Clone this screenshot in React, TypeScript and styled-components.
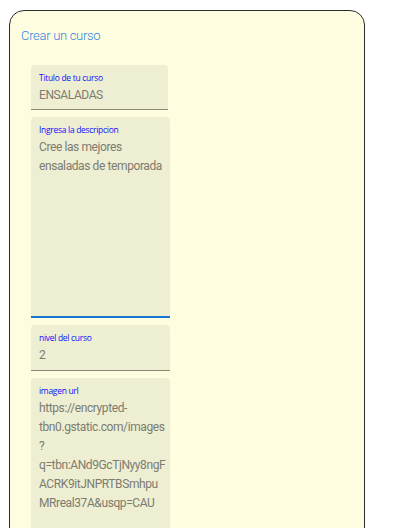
import React from "react";
import styled, { createGlobalStyle } from "styled-components";

const GlobalStyle = createGlobalStyle`
	body {
		margin: 8px;
		background: #ffffff;
		font-family: Roboto, "Liberation Sans", sans-serif;
	}
`;

const Card = styled.div`
	box-sizing: border-box;
	width: 356px;
	height: 560px;
	margin: 2px 0 0 1px;
	border: 1px solid #2b2b2b;
	border-radius: 15px;
	background: #fffde0;
	overflow: hidden;
`;

const Title = styled.h2`
	margin: 0;
	padding: 17px 0 0 11px;
	font-family: Roboto, "Liberation Sans", sans-serif;
	font-weight: 300;
	font-size: 13px;
	line-height: 16px;
	letter-spacing: -0.3px;
	color: #2f86e0;
`;

const Form = styled.form`
	display: flex;
	flex-direction: column;
	align-items: flex-start;
	gap: 7px;
	padding: 21px 0 0 21px;
`;

interface FieldProps {
	$width: number;
	$height?: number;
	$focused?: boolean;
	$open?: boolean;
}

const Field = styled.div<FieldProps>`
	box-sizing: border-box;
	width: ${(props) => props.$width}px;
	height: ${(props) => (props.$height ? `${props.$height}px` : "auto")};
	padding: 7px 8px 6px 8px;
	background: #eeeed3;
	border-radius: 4px 4px 0 0;
	border-bottom: ${(props) =>
		props.$open
			? "none"
			: props.$focused
			? "2px solid #1976d2"
			: "1px solid #8a8a76"};
`;

const Label = styled.label`
	display: block;
	font-family: "Open Sans", "Liberation Sans", sans-serif;
	font-size: 8.5px;
	line-height: 11px;
	letter-spacing: -0.3px;
	color: #1010ff;
`;

const Value = styled.div`
	margin-top: 3px;
	font-family: Roboto, "Liberation Sans", sans-serif;
	font-size: 12px;
	line-height: 19px;
	letter-spacing: -0.4px;
	color: #7c7c70;
	white-space: pre-line;
`;

function App() {
	return (
		<>
			<GlobalStyle />
			<Card>
				<Title>Crear un curso</Title>
				<Form>
					<Field $width={137} $height={45}>
						<Label>Titulo de tu curso</Label>
						<Value>ENSALADAS</Value>
					</Field>
					<Field $width={139} $height={201} $focused>
						<Label>Ingresa la descripcion</Label>
						<Value>{"Cree las mejores\nensaladas de temporada"}</Value>
					</Field>
					<Field $width={139} $height={46}>
						<Label>nivel del curso</Label>
						<Value>2</Value>
					</Field>
					<Field $width={139} $height={170} $open>
						<Label>imagen url</Label>
						<Value>
							{
								"https://encrypted-\ntbn0.gstatic.com/images\n?\nq=tbn:ANd9GcTjNyy8ngF\nACRK9itJNPRTBSmhpu\nMRreal37A&usqp=CAU"
							}
						</Value>
					</Field>
				</Form>
			</Card>
		</>
	);
}

export default App;
